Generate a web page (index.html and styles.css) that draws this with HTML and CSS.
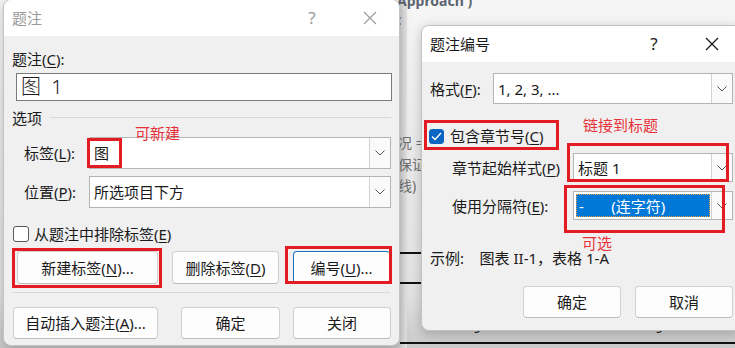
FILE: index.html
```html
<!DOCTYPE html>
<html lang="zh">
<head>
    <meta charset="UTF-8">
    <title>题注</title>
    <link rel="stylesheet" href="styles.css">
</head>
<body>
    <!-- 背景文档 -->
    <div class="doc">
        <div class="doc-edge"></div>
        <div class="doc-text heading">Approach )</div>
        <div class="doc-text colon">:</div>
        <div class="doc-text t1">况 =</div>
        <div class="doc-text t2">保证</div>
        <div class="doc-text t3">线)</div>
        <div class="doc-rule r1"></div>
        <div class="doc-rule r2"></div>
        <div class="doc-rule r3"></div>
        <div class="doc-text g1">ɔ</div>
        <div class="doc-text g2">ɔ</div>
    </div>

    <!-- 题注 对话框 -->
    <div class="dialog dlg-caption inactive">
        <div class="titlebar">
            <span class="title">题注</span>
            <span class="help">?</span>
            <span class="close">
                <svg width="14" height="14" viewBox="0 0 14 14"><path d="M1 1 L13 13 M13 1 L1 13" stroke="currentColor" stroke-width="1.1" fill="none"/></svg>
            </span>
        </div>
        <div class="body">
            <div class="field-label">题注(<u>C</u>):</div>
            <div class="text-input">图 1</div>

            <div class="group-title">
                <span>选项</span>
                <span class="line"></span>
            </div>

            <div class="row row-label">
                <span class="label">标签(<u>L</u>):</span>
                <div class="combo wide">
                    <span class="value">图</span>
                    <span class="drop"><svg width="10" height="6" viewBox="0 0 10 6"><polyline points="0.5,0.5 5,5 9.5,0.5" fill="none" stroke="#555" stroke-width="1"/></svg></span>
                </div>
            </div>
            <div class="row row-pos">
                <span class="label">位置(<u>P</u>):</span>
                <div class="combo wide">
                    <span class="value">所选项目下方</span>
                    <span class="drop"><svg width="10" height="6" viewBox="0 0 10 6"><polyline points="0.5,0.5 5,5 9.5,0.5" fill="none" stroke="#555" stroke-width="1"/></svg></span>
                </div>
            </div>

            <div class="check-row left-check">
                <span class="checkbox"></span>
                <span>从题注中排除标签(<u>E</u>)</span>
            </div>

            <div class="button-row top-buttons">
                <button class="btn w141">新建标签(<u>N</u>)...</button>
                <button class="btn w107">删除标签(<u>D</u>)</button>
                <button class="btn w97 focused">编号(<u>U</u>)...</button>
            </div>

            <div class="separator"></div>

            <div class="button-row bottom-buttons">
                <button class="btn w145">自动插入题注(<u>A</u>)...</button>
                <button class="btn w99 ml23">确定</button>
                <button class="btn w98 ml13">关闭</button>
            </div>
        </div>
    </div>

    <!-- 题注编号 对话框 -->
    <div class="dialog dlg-number">
        <div class="titlebar">
            <span class="title">题注编号</span>
            <span class="help">?</span>
            <span class="close">
                <svg width="14" height="14" viewBox="0 0 14 14"><path d="M1 1 L13 13 M13 1 L1 13" stroke="currentColor" stroke-width="1.3" fill="none"/></svg>
            </span>
        </div>
        <div class="body">
            <div class="row row-format">
                <span class="label">格式(<u>F</u>):</span>
                <div class="combo format">
                    <span class="value">1, 2, 3, ...</span>
                    <span class="drop"><svg width="10" height="6" viewBox="0 0 10 6"><polyline points="0.5,0.5 5,5 9.5,0.5" fill="none" stroke="#555" stroke-width="1"/></svg></span>
                </div>
            </div>

            <div class="check-row right-check">
                <span class="checkbox checked">
                    <svg width="11" height="9" viewBox="0 0 11 9"><polyline points="1,4.5 4,7.5 10,1" fill="none" stroke="#fff" stroke-width="1.3"/></svg>
                </span>
                <span>包含章节号(<u>C</u>)</span>
            </div>

            <div class="row row-style">
                <span class="label">章节起始样式(<u>P</u>)</span>
                <div class="combo narrow">
                    <span class="value">标题 1</span>
                    <span class="drop"><svg width="10" height="6" viewBox="0 0 10 6"><polyline points="0.5,0.5 5,5 9.5,0.5" fill="none" stroke="#555" stroke-width="1"/></svg></span>
                </div>
            </div>
            <div class="row row-sep">
                <span class="label">使用分隔符(<u>E</u>):</span>
                <div class="combo narrow">
                    <span class="value selected">-&nbsp;&nbsp;&nbsp;&nbsp;&nbsp;&nbsp;&nbsp;(连字符)</span>
                    <span class="drop"><svg width="10" height="6" viewBox="0 0 10 6"><polyline points="0.5,0.5 5,5 9.5,0.5" fill="none" stroke="#555" stroke-width="1"/></svg></span>
                </div>
            </div>

            <div class="example">示例:&nbsp;&nbsp;&nbsp;&nbsp;图表 II-1，表格 1-A</div>

            <div class="button-row right-buttons">
                <button class="btn w98">确定</button>
                <button class="btn w98">取消</button>
            </div>
        </div>
    </div>

    <!-- 红色标注 -->
    <div class="mark box-tag"></div>
    <div class="mark box-new"></div>
    <div class="mark box-num"></div>
    <div class="mark box-check"></div>
    <div class="mark box-style"></div>
    <div class="mark box-sep"></div>
    <div class="note note-new">可新建</div>
    <div class="note note-link">链接到标题</div>
    <div class="note note-opt">可选</div>
</body>
</html>
```

FILE: styles.css
```css
/* 全局 */
html, body {
    margin: 0;
    padding: 0;
    width: 100%;
    height: 100%;
    overflow: hidden;
}

body {
    position: relative;
    font-family: "Noto Sans", "Noto Sans CJK SC", sans-serif;
    font-size: 15px;
    line-height: 20px;
    color: #1a1a1a;
    background: linear-gradient(to bottom, #f6f6f6 0, #ececec 40%, #e2e2e2 85%, #c9c9c9 100%);
}

u { text-decoration-thickness: 1px; text-underline-offset: 2px; }

/* 背景文档 */
.doc { position: absolute; left: 0; top: 0; width: 100%; height: 100%; }
.doc-edge {
    position: absolute;
    left: 400px; top: 0;
    width: 7px; height: 348px;
    background: linear-gradient(to right, #d2d2d2, #e4e4e4);
}
.doc-text { position: absolute; color: #6f6f6f; font-size: 14px; }
.doc-text.heading { left: 397px; top: -9px; font-weight: bold; color: #5b6470; }
.doc-text.colon { left: 398px; top: 10px; }
.doc-text.t1 { left: 398px; top: 133px; }
.doc-text.t2 { left: 398px; top: 155px; }
.doc-text.t3 { left: 398px; top: 176px; }
.doc-text.g1 { left: 474px; top: 318px; color: #222; }
.doc-text.g2 { left: 656px; top: 318px; color: #222; }
.doc-rule { position: absolute; height: 2px; background: #111; }
.doc-rule.r1 { left: 400px; top: 252px; width: 30px; }
.doc-rule.r2 { left: 400px; top: 282px; width: 30px; }
.doc-rule.r3 { left: 400px; top: 342px; width: 335px; }

/* 对话框 */
.dialog {
    position: absolute;
    background: #f0f0f0;
    border: 1px solid #c3c3c3;
    border-radius: 8px;
    overflow: hidden;
    box-shadow: 0 3px 12px rgba(0, 0, 0, 0.22);
}
.dlg-caption { left: 3px; top: -1px; width: 397px; height: 347px; box-sizing: border-box; }
.dlg-number { left: 421px; top: 25px; width: 321px; height: 306px; box-sizing: border-box; }

.titlebar {
    display: flex;
    align-items: center;
    background: #fff;
    padding: 0 19px 0 8px;
    height: 36px;
}
.titlebar .title { flex: 1; }
.titlebar .help { width: 20px; margin-right: 38px; text-align: center; font-size: 17px; }
.titlebar .close { width: 20px; display: flex; justify-content: center; }
.inactive .titlebar { color: #9a9a9a; }

.body { display: flex; flex-direction: column; }

/* 题注 对话框内容 */
.field-label { margin: 13px 0 0 8px; height: 20px; }
.text-input {
    margin: 4px 0 0 12px;
    width: 376px;
    height: 28px;
    box-sizing: border-box;
    border: 1px solid #7a7a7a;
    background: #fff;
    padding-left: 4px;
    font-size: 20px;
    line-height: 26px;
    font-weight: 300;
    word-spacing: 5px;
}
.group-title { display: flex; align-items: center; margin: 7px 8px 0 8px; height: 20px; }
.group-title .line { flex: 1; height: 1px; background: #d8d8d8; margin-left: 8px; margin-top: -2px; }

.row { display: flex; align-items: center; }
.row-label { margin-top: 9px; }
.row-pos { margin-top: 7px; }
.dlg-caption .row .label { width: 65px; padding-left: 20px; }

.combo {
    display: flex;
    align-items: stretch;
    box-sizing: border-box;
    border: 1px solid #b4b4b4;
    background: #fff;
}
.combo .value { flex: 1; padding-left: 4px; display: flex; align-items: center; }
.combo .drop {
    width: 20px;
    border-left: 1px solid #d2d2d2;
    background: #fafafa;
    display: flex;
    align-items: center;
    justify-content: center;
}
.combo.wide { width: 302px; height: 32px; }

.check-row { display: flex; align-items: center; height: 20px; }
.left-check { margin: 16px 0 0 9px; }
.checkbox {
    width: 16px; height: 16px;
    box-sizing: border-box;
    border: 1px solid #5a5a5a;
    border-radius: 3px;
    background: #fff;
    margin-right: 5px;
    display: flex;
    align-items: center;
    justify-content: center;
}
.checkbox.checked { background: #0b66c2; border-color: #0b66c2; }

/* 按钮 */
.button-row { display: flex; }
.btn {
    font: inherit;
    color: #1a1a1a;
    background: #fdfdfd;
    border: 1px solid #d0d0d0;
    border-bottom-color: #bdbdbd;
    border-radius: 4px;
    padding: 0;
    height: 32px;
}
.btn.focused { border-color: #1b6fc4 #d0d0d0 #bdbdbd #1b6fc4; }
.top-buttons { margin: 7px 0 0 13px; gap: 14px; }
.top-buttons .btn { height: 33px; }
.separator { margin: 8px 9px 0 9px; height: 1px; background: #d8d8d8; }
.bottom-buttons { margin: 14px 0 0 9px; }
.w141 { width: 141px; }
.w107 { width: 107px; }
.w97 { width: 97px; }
.w145 { width: 145px; }
.w99 { width: 99px; }
.w98 { width: 98px; }
.ml23 { margin-left: 23px; }
.ml13 { margin-left: 13px; }

/* 题注编号 对话框内容 */
.row-format { margin-top: 11px; }
.dlg-number .row-format .label { width: 63px; padding-left: 8px; }
.combo.format { width: 240px; height: 31px; }
.right-check { margin: 22px 0 0 7px; }
.right-check .checkbox { width: 15px; height: 15px; margin-right: 6px; }
.row-style { margin-top: 7px; }
.row-sep { margin-top: 9px; }
.row-style .label, .row-sep .label { width: 121px; padding-left: 30px; }
.combo.narrow { width: 160px; height: 29px; }
.combo .value.selected {
    margin: 2px 1px 2px 2px;
    padding-left: 3px;
    background: #0078d7;
    color: #fff;
    outline: 1px dotted #e0a040;
    outline-offset: -1px;
}
.example { margin: 30px 0 0 8px; height: 16px; line-height: 16px; }
.right-buttons { margin: 20px 0 0 101px; gap: 14px; }

/* 红色标注 */
.mark {
    position: absolute;
    border: 3px solid #e31b23;
    box-sizing: border-box;
}
.box-tag { left: 87px; top: 138px; width: 35px; height: 30px; }
.box-new { left: 12px; top: 248px; width: 150px; height: 40px; }
.box-num { left: 285px; top: 246px; width: 107px; height: 38px; }
.box-check { left: 424px; top: 120px; width: 135px; height: 30px; }
.box-style { left: 567px; top: 143px; width: 162px; height: 39px; }
.box-sep { left: 564px; top: 185px; width: 161px; height: 48px; }

.note { position: absolute; color: #e8323a; font-size: 15px; line-height: 16px; }
.note-new { left: 135px; top: 125px; }
.note-link { left: 583px; top: 117px; }
.note-opt { left: 582px; top: 235px; }
```
